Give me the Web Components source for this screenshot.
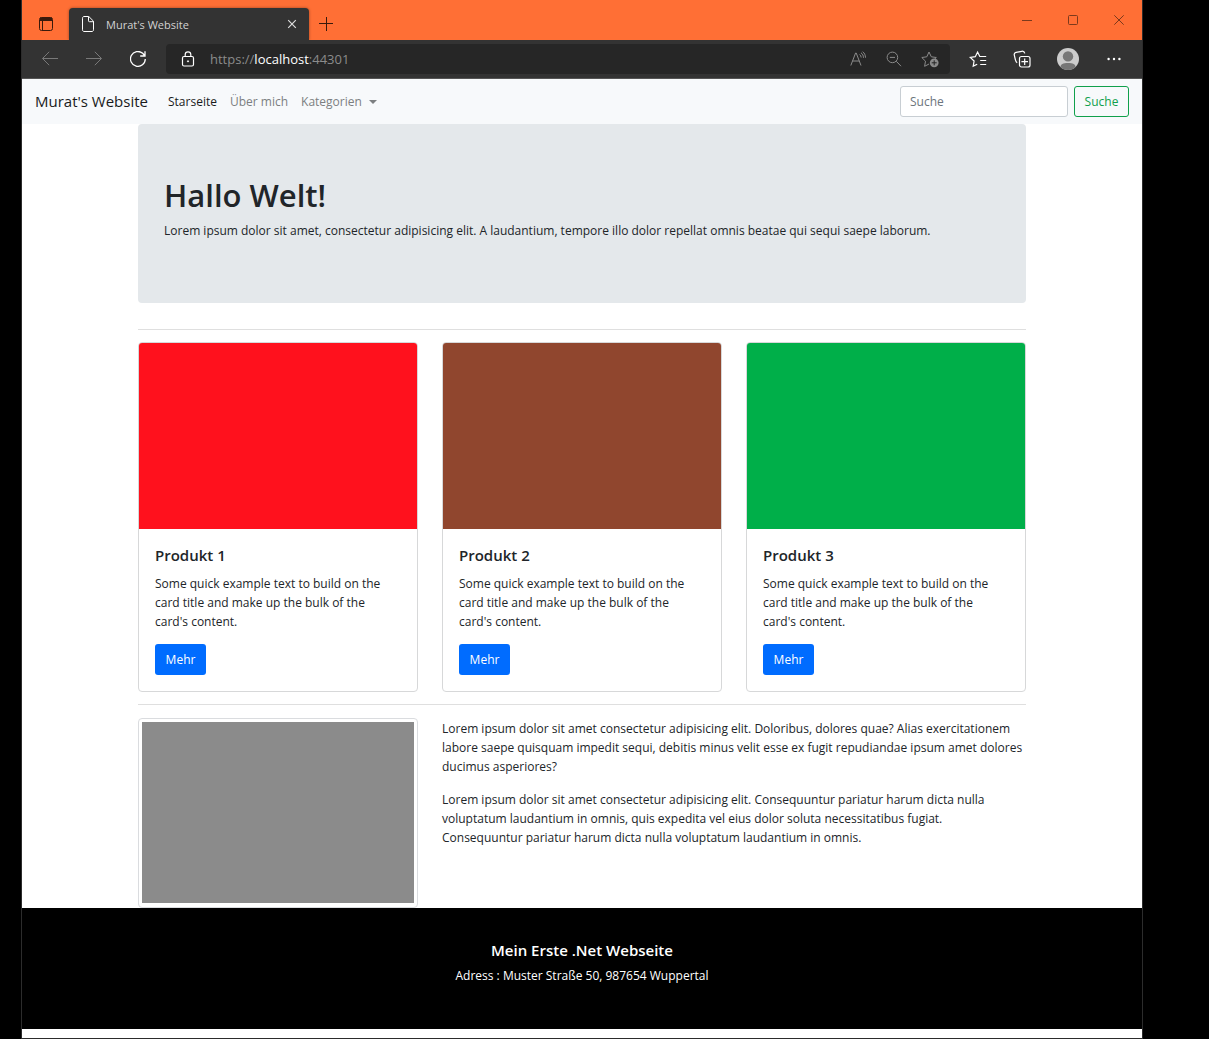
<!DOCTYPE html>
<html lang="de">
<head>
<meta charset="utf-8">
<title>Murat's Website</title>
<style>
  body { margin: 0; background: #000; font-family: "Segoe UI", "Open Sans", "Noto Sans", sans-serif; font-size: 12px; line-height: 19px; color: #212529; }
</style>
</head>
<body>
<browser-window>
  <tab-strip slot="chrome" label="Murat's Website"></tab-strip>
  <tool-bar slot="chrome"></tool-bar>
  <site-nav></site-nav>
  <site-container>
    <hero-box>
      <span slot="title">Hallo Welt!</span>
      Lorem ipsum dolor sit amet, consectetur adipisicing elit. A laudantium, tempore illo dolor repellat omnis beatae qui sequi saepe laborum.
    </hero-box>
    <card-row>
      <product-card style="--cover:#ff111d"><span slot="title">Produkt 1</span>Some quick example text to build on the card title and make up the bulk of the card's content.</product-card>
      <product-card style="--cover:#90462e"><span slot="title">Produkt 2</span>Some quick example text to build on the card title and make up the bulk of the card's content.</product-card>
      <product-card style="--cover:#00af49"><span slot="title">Produkt 3</span>Some quick example text to build on the card title and make up the bulk of the card's content.</product-card>
    </card-row>
    <about-row>
      <about-text>Lorem ipsum dolor sit amet consectetur adipisicing elit. Doloribus, dolores quae? Alias exercitationem labore saepe quisquam impedit sequi, debitis minus velit esse ex fugit repudiandae ipsum amet dolores ducimus asperiores?</about-text>
      <about-text>Lorem ipsum dolor sit amet consectetur adipisicing elit. Consequuntur pariatur harum dicta nulla voluptatum laudantium in omnis, quis expedita vel eius dolor soluta necessitatibus fugiat.<br>Consequuntur pariatur harum dicta nulla voluptatum laudantium in omnis.</about-text>
    </about-row>
  </site-container>
  <site-footer>
    <span slot="title">Mein Erste .Net Webseite</span>
    Adress : Muster Straße 50, 987654 Wuppertal
  </site-footer>
</browser-window>

<script>
const RESET = `*, *::before, *::after { box-sizing: border-box; }
  button, input { font: inherit; color: inherit; margin: 0; padding: 0; border: 0; background: none; border-radius: 0; }
  a { color: inherit; text-decoration: none; }
  h1, h2, p, ul { margin: 0; padding: 0; font-weight: inherit; font-size: inherit; }`;

function define(name, css, html) {
  customElements.define(name, class extends HTMLElement {
    constructor() {
      super();
      this.attachShadow({ mode: 'open' }).innerHTML = `<style>${RESET}${css}</style>${typeof html === 'function' ? html(this) : html}`;
    }
  });
}

const ICONS = {
  tabs: [16, '<rect x="1.5" y="1.5" width="13" height="13" rx="2"/><path d="M1.5 4.5h13M4.5 5v9.5"/><path d="M2 3h12" stroke-width="3"/>'],
  page: [16, '<path d="M2.5 2.2c0-.9.6-1.7 1.5-1.7h4.8l4.7 4.7v8.6c0 .9-.6 1.7-1.5 1.7H4c-.9 0-1.5-.8-1.5-1.7zM8.5.8v4c0 .6.3.9.9.9h4"/>'],
  close: [10, '<path d="M1.2 1.2l7.6 7.6M8.8 1.2L1.2 8.8" stroke-width="1.2"/>'],
  plus: [14, '<path d="M7.5 0v14M0 6.5h14"/>'],
  min: [10, '<path d="M0 5.5h10"/>'],
  max: [10, '<rect x=".5" y=".5" width="9" height="9" rx="1"/>'],
  exit: [10, '<path d="M.3.3l9.4 9.4M9.7.3L.3 9.7"/>'],
  back: [16, '<path d="M16 7.5H.7M7.2.8L.5 7.5l6.7 6.7"/>'],
  forward: [16, '<path d="M0 7.5h15.3M8.8.8l6.7 6.7-6.7 6.7"/>'],
  reload: [16, '<path d="M15.3 8A7.4 7.4 0 1 1 12.7 2.3L15 5M15 .3V5h-4.8" stroke-width="1.3"/>'],
  lock: [16, '<rect x="2.5" y="5.5" width="11" height="9.5" rx="1.5" stroke-width="1.2"/><path d="M5.2 5.5V3.6a2.8 2.8 0 0 1 5.6 0v1.9" stroke-width="1.2"/><circle cx="8" cy="10.3" r=".6" fill="currentColor"/>'],
  read: [16, '<path d="M.8 14.5L5.6 2h.6L11 14.5M2.6 10h6.6M9.6 3.5c1 .8 1.5 1.7 1.6 3M11 1.8c1.6 1.1 2.4 2.8 2.5 5M12.7.7c1.8 1.4 2.7 3.3 2.8 6"/>'],
  zoom: [16, '<circle cx="6.4" cy="6.4" r="5.3"/><path d="M10.3 10.3l4.7 4.9M3.8 6.4H9"/>'],
  staradd: [18, '<path d="M8 14l-4.4 2.3.9-5.1L.8 7.5l5-.7L8 2l2.3 4.8 5 .7-1.8 1.7"/><circle cx="13.2" cy="12.8" r="4.4" fill="currentColor" stroke="none"/><path d="M13.2 10.3v5M10.7 12.8h5" stroke="#262626"/>'],
  favs: [18, '<path d="M8.2 14.2L4.2 16.1l.9-5.1L1.3 7.4l5-.7L8.6 2l2.2 4.5h6.4M11.2 10.5h6M11.2 14.5h6" stroke-width="1.2"/>'],
  collect: [18, '<rect x="6.5" y="6.5" width="10.5" height="10.5" rx="2" stroke-width="1.2"/><path d="M11.7 8.4v6.6M8.4 11.7h6.6M4.2 12.8C2.8 12 2.7 11 2.2 9L1.3 5.2C.9 3.6 1.6 2.8 3 2.4L8.8 1.3c1.5-.3 2.5.3 3 2.1" stroke-width="1.2"/>'],
  user: [22, '<defs><clipPath id="c"><circle cx="11" cy="11" r="11"/></clipPath></defs><g clip-path="url(#c)" stroke="none"><rect width="22" height="22" fill="#ccc"/><circle cx="11" cy="8.4" r="5.2" fill="#777"/><path d="M3.5 22v-3.2c0-2.4 2.5-3.8 7.5-3.8s7.5 1.4 7.5 3.8V22z" fill="#777"/></g>'],
  more: [14, '<g fill="currentColor" stroke="none"><circle cx="1.6" cy="7" r="1.2"/><circle cx="7" cy="7" r="1.2"/><circle cx="12.4" cy="7" r="1.2"/></g>'],
};

define('ui-icon', `:host { display: inline-flex; } svg { display: block; fill: none; stroke: currentColor; stroke-width: 1; }`, el => {
  const [size, body] = ICONS[el.getAttribute('name')];
  return `<svg width="${size}" height="${size}" viewBox="0 0 ${size} ${size}" aria-hidden="true">${body}</svg>`;
});

define('browser-window', `
  :host { display: flex; flex-direction: column; min-height: 100vh; box-sizing: border-box; margin: 0 66px 0 21px; border: solid #2c2c2c; border-width: 0 1px 1px; background: #fff; }`,
  `<slot name="chrome"></slot><slot></slot>`);

define('tab-strip', `
  :host { display: flex; align-items: flex-end; height: 40px; background: #ff6f35; color: #3a1a0c; }
  button { display: flex; align-items: center; justify-content: center; height: 32px; }
  .menu { width: 47px; }
  .tab { display: flex; align-items: center; width: 240px; height: 32px; padding: 0 7px 0 11px; gap: 10px; border-radius: 4px 4px 0 0; background: #333; color: #fff; box-shadow: 0 0 3px #0006; }
  .tab span { flex: 1; font-size: 11px; color: #d2d2d2; }
  .tab button { width: 20px; color: #ddd; }
  .new { width: 34px; }
  .controls { display: flex; margin-left: auto; height: 40px; color: #7c3a1d; }
  .controls button { width: 46px; height: 40px; }`,
  el => `<button class="menu" aria-label="Tabs"><ui-icon name="tabs"></ui-icon></button>
  <div class="tab"><ui-icon name="page"></ui-icon><span>${el.getAttribute('label')}</span><button aria-label="Tab schließen"><ui-icon name="close"></ui-icon></button></div>
  <button class="new" aria-label="Neuer Tab"><ui-icon name="plus"></ui-icon></button>
  <div class="controls"><button aria-label="Minimieren"><ui-icon name="min"></ui-icon></button><button aria-label="Maximieren"><ui-icon name="max"></ui-icon></button><button aria-label="Schließen"><ui-icon name="exit"></ui-icon></button></div>`);

define('tool-bar', `
  :host { display: flex; box-sizing: border-box; align-items: center; height: 39px; padding: 0 6px; background: #333; border-bottom: 1px solid #555; color: #fff; }
  button { display: flex; align-items: center; justify-content: center; width: 44px; height: 30px; }
  button:disabled { color: #797979; }
  .address { display: flex; align-items: center; flex: 1; height: 30px; margin: 0 6px; padding-right: 2px; border-radius: 4px; background: #262626; }
  .address div { flex: 1; font-size: 13px; color: #8b8b8b; outline: 0; }
  b { font-weight: 400; color: #fff; }
  .address .small { width: 36px; color: #8b8b8b; }
  .user { width: 48px; }`,
  `<button disabled aria-label="Zurück"><ui-icon name="back"></ui-icon></button>
  <button disabled aria-label="Vorwärts"><ui-icon name="forward"></ui-icon></button>
  <button aria-label="Aktualisieren"><ui-icon name="reload"></ui-icon></button>
  <div class="address">
    <button aria-label="Verbindung"><ui-icon name="lock"></ui-icon></button>
    <div role="textbox" contenteditable="true" spellcheck="false" aria-label="Adresse">https://<b>localhost</b>:44301</div>
    <button class="small" aria-label="Vorlesen"><ui-icon name="read"></ui-icon></button>
    <button class="small" aria-label="Verkleinern"><ui-icon name="zoom"></ui-icon></button>
    <button class="small" aria-label="Favorit hinzufügen"><ui-icon name="staradd"></ui-icon></button>
  </div>
  <button aria-label="Favoriten"><ui-icon name="favs"></ui-icon></button>
  <button aria-label="Sammlungen"><ui-icon name="collect"></ui-icon></button>
  <button class="user" aria-label="Profil"><ui-icon name="user"></ui-icon></button>
  <button aria-label="Mehr"><ui-icon name="more"></ui-icon></button>`);

define('site-nav', `
  :host { display: flex; align-items: center; justify-content: space-between; height: 45px; padding: 0 13px; background: #f7f9fb; }
  nav { display: flex; align-items: center; color: #7c7f81; }
  .brand { margin-right: 20px; font-size: 15px; color: #1a1b1c; }
  ul { display: flex; gap: 13px; list-style: none; }
  .active { color: #1a1b1c; }
  li button { display: flex; align-items: center; gap: 7px; }
  li button::after { content: ""; border: solid transparent; border-width: 4px 4px 0; border-top-color: currentColor; }
  form { display: flex; gap: 6px; }
  input { width: 168px; height: 31px; padding: 0 9px; border: 1px solid #c8ced3; border-radius: 3px; background: #fff; }
  input::placeholder { color: #6c757d; opacity: 1; }
  form button { width: 55px; height: 31px; border: 1px solid #10a04b; border-radius: 3px; color: #10a04b; }`,
  `<nav><a class="brand" href="#">Murat's Website</a>
    <ul><li><a class="active" href="#">Starseite</a></li><li><a href="#">Über mich</a></li><li><button>Kategorien</button></li></ul></nav>
  <form><input type="search" placeholder="Suche" aria-label="Suche"><button type="button">Suche</button></form>`);

define('site-container', `
  :host { display: block; box-sizing: border-box; width: 100%; max-width: 912px; margin: 0 auto; padding: 0 12px; }`, `<slot></slot>`);

define('hero-box', `
  :host { display: block; margin-bottom: 26px; padding: 51px 26px 63px; border-radius: 4px; background: #e4e8eb; }
  h1 { margin-bottom: 5px; font-size: 31px; font-weight: 600; line-height: 41px; }`,
  `<h1><slot name="title"></slot></h1><p><slot></slot></p>`);

define('card-row', `
  :host { display: grid; grid-template-columns: repeat(3, 1fr); gap: 24px; padding: 12px 0; border: solid #dfdfdf; border-width: 1px 0; }`, `<slot></slot>`);

define('product-card', `
  :host { display: block; border: 1px solid #d7d8d9; border-radius: 4px; overflow: hidden; }
  .cover { aspect-ratio: 278 / 186; background: var(--cover); }
  .body { padding: 17px 24px 16px 16px; }
  h2 { margin-bottom: 9px; font-size: 15px; font-weight: 600; }
  p { margin-bottom: 13px; }
  a { display: inline-flex; align-items: center; justify-content: center; width: 51px; height: 31px; border-radius: 3px; background: #006cff; color: #fff; vertical-align: top; }`,
  `<div class="cover"></div><div class="body"><h2><slot name="title"></slot></h2><p><slot></slot></p><a href="#">Mehr</a></div>`);

define('about-row', `
  :host { display: grid; grid-template-columns: repeat(3, 1fr); gap: 24px; padding-top: 13px; }
  .thumb { padding: 3px 3px 4px; border: 1px solid #dadcdf; border-radius: 4px; }
  .thumb div { aspect-ratio: 272 / 181; background: #8b8b8b; }
  .texts { grid-column: span 2; padding-top: 1px; }`,
  `<div class="thumb"><div></div></div><div class="texts"><slot></slot></div>`);

define('about-text', `:host { display: block; } p { margin-bottom: 14px; }`, `<p><slot></slot></p>`);

define('site-footer', `
  :host { display: block; padding: 33px 12px 44px; background: #000; color: #fff; text-align: center; }
  h2 { margin-bottom: 6px; font-size: 15px; font-weight: 600; }`,
  `<h2><slot name="title"></slot></h2><p><slot></slot></p>`);
</script>
</body>
</html>
